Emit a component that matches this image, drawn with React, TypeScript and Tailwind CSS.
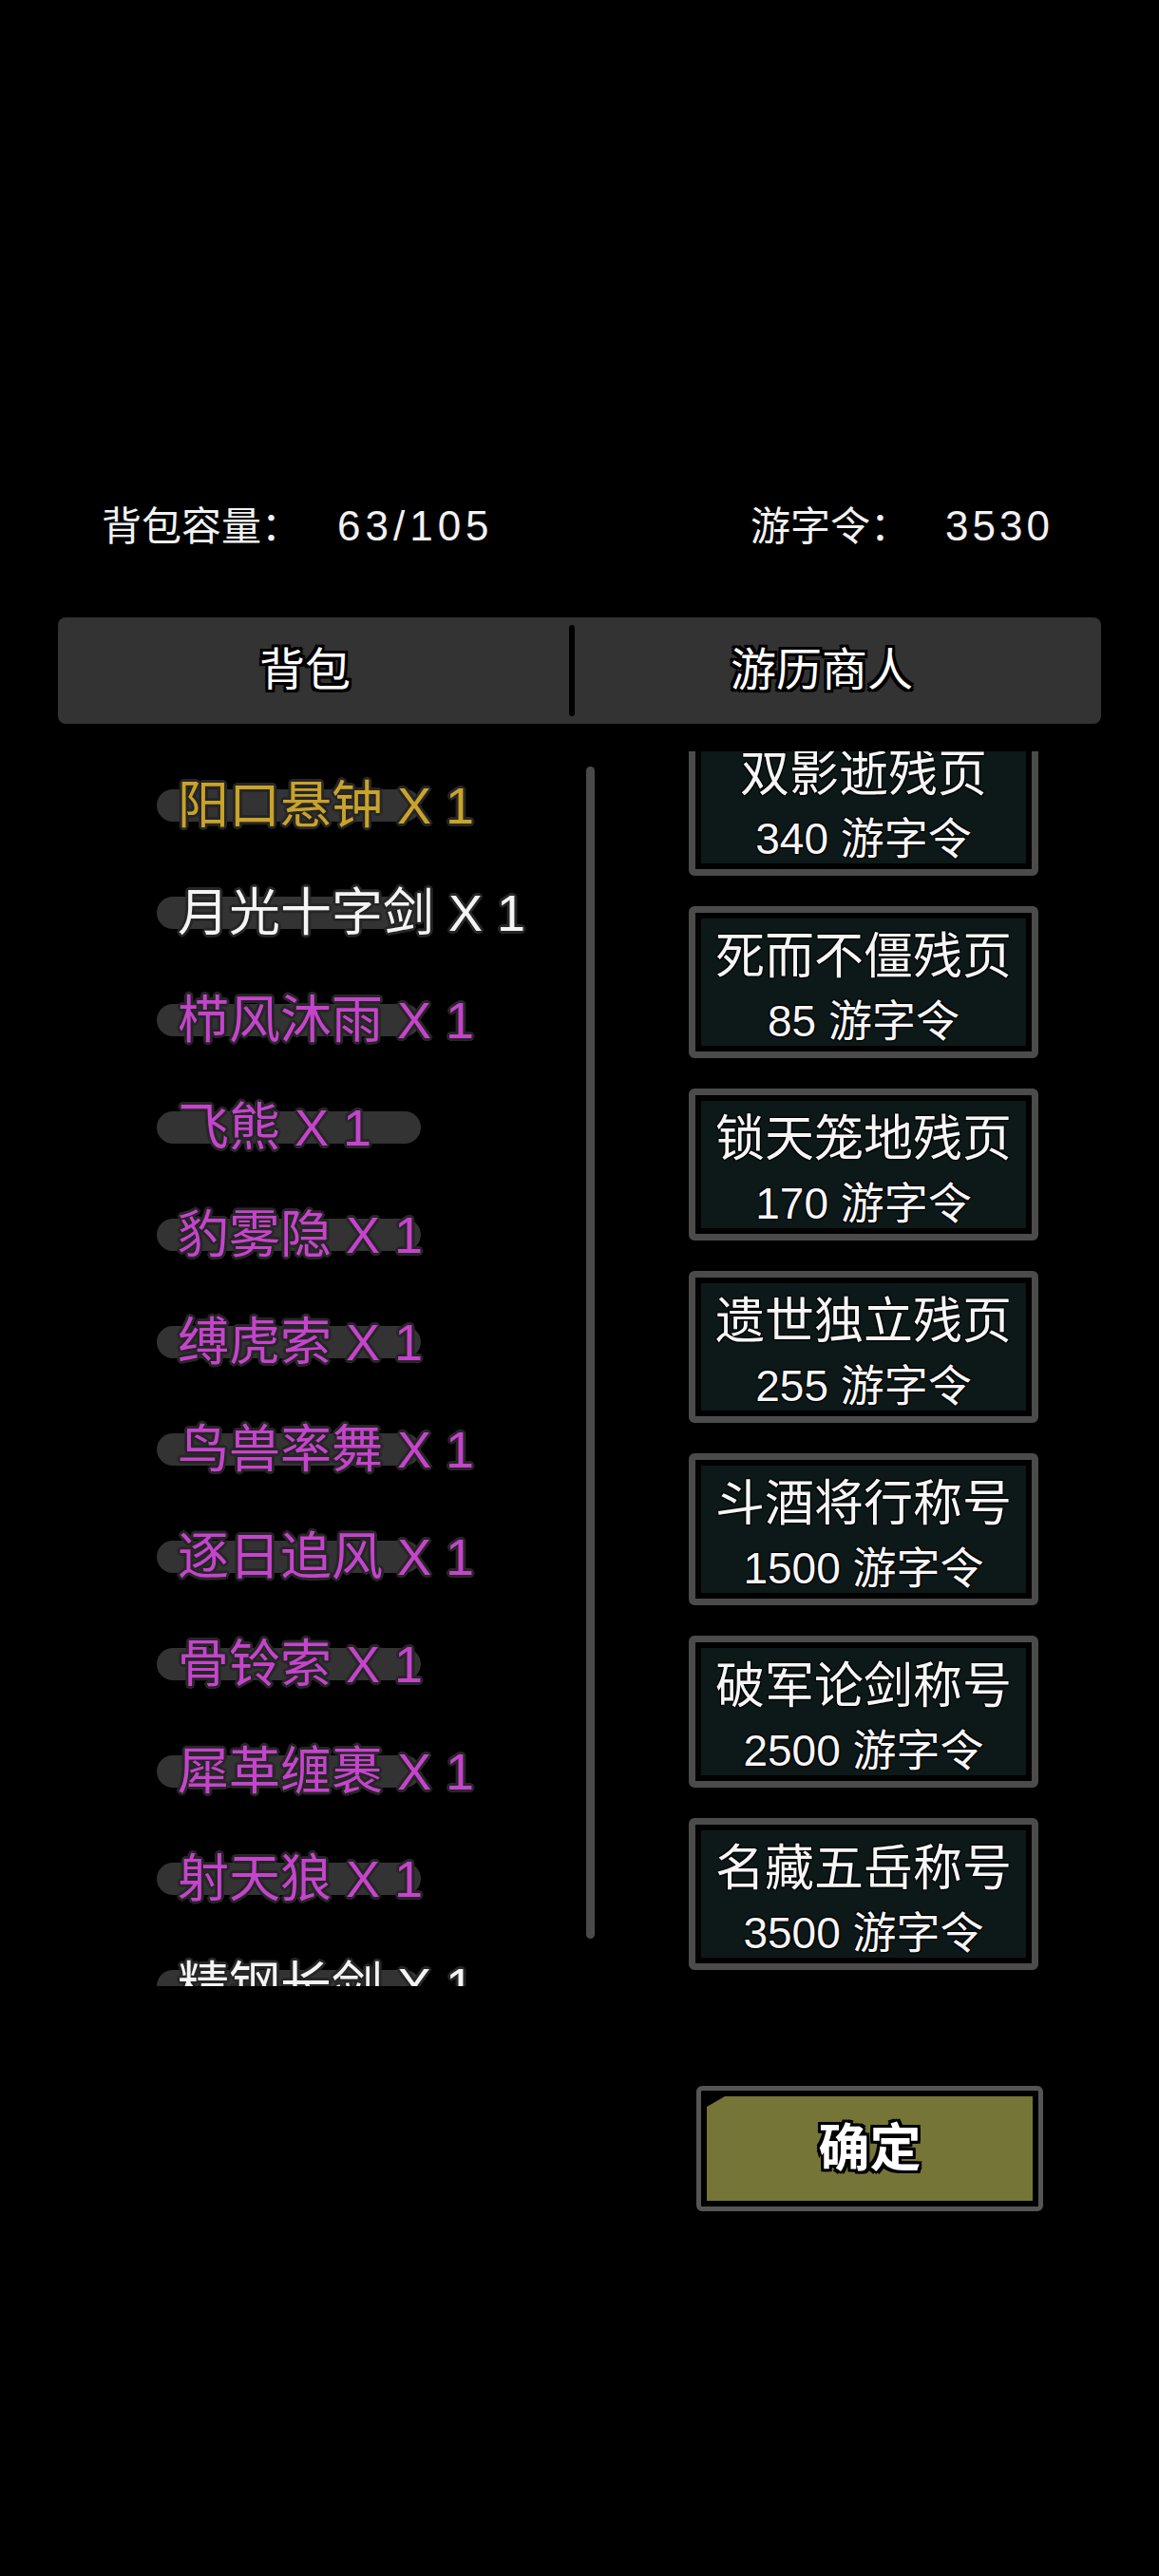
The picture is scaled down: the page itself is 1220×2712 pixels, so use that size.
import React from "react"

type Item = { name: string; color: "gold" | "white" | "purple" }

const items: Item[] = [
  { name: "阳口悬钟", color: "gold" },
  { name: "月光十字剑", color: "white" },
  { name: "栉风沐雨", color: "purple" },
  { name: "飞熊", color: "purple" },
  { name: "豹雾隐", color: "purple" },
  { name: "缚虎索", color: "purple" },
  { name: "鸟兽率舞", color: "purple" },
  { name: "逐日追风", color: "purple" },
  { name: "骨铃索", color: "purple" },
  { name: "犀革缠裹", color: "purple" },
  { name: "射天狼", color: "purple" },
  { name: "精钢长剑", color: "white" },
]

const goods = [
  { name: "双影逝残页", price: 340 },
  { name: "死而不僵残页", price: 85 },
  { name: "锁天笼地残页", price: 170 },
  { name: "遗世独立残页", price: 255 },
  { name: "斗酒将行称号", price: 1500 },
  { name: "破军论剑称号", price: 2500 },
  { name: "名藏五岳称号", price: 3500 },
]

const colorClass = {
  gold: "text-[#c9a32a]",
  white: "text-[#f4f4f4]",
  purple: "text-[#c544cc]",
}

const itemOutline =
  "[text-shadow:3px_0_0_#262626,-3px_0_0_#262626,0_3px_0_#262626,0_-3px_0_#262626,2px_2px_0_#262626,-2px_-2px_0_#262626,2px_-2px_0_#262626,-2px_2px_0_#262626]"

const blackOutline =
  "[text-shadow:3px_0_0_#000,-3px_0_0_#000,0_3px_0_#000,0_-3px_0_#000,3px_3px_0_#000,-3px_-3px_0_#000,3px_-3px_0_#000,-3px_3px_0_#000]"

const thinOutline =
  "[text-shadow:1px_1px_1px_#000,-1px_-1px_1px_#000,1px_-1px_1px_#000,-1px_1px_1px_#000]"

function ItemRow({ item }: { item: Item }) {
  return (
    <div className="relative flex h-[113px] shrink-0 items-center">
      {/* pill behind the label */}
      <div className="absolute left-0 top-1/2 h-[34px] w-[278px] -translate-y-1/2 rounded-full bg-[#333333]" />
      <span className={`relative ml-[22px] whitespace-nowrap text-[54px] leading-none ${colorClass[item.color]} ${itemOutline}`}>
        {item.name} X 1
      </span>
    </div>
  )
}

function ShopCard({ name, price }: { name: string; price: number }) {
  return (
    <div className="h-[160px] w-[368px] shrink-0 rounded-[6px] border-[7px] border-[#4b4b4b] bg-black p-[6px]">
      <div className="flex h-full flex-col items-center overflow-hidden bg-[#0d1919] pt-[13px] text-[#f6f6f6]">
        <div className={`whitespace-nowrap text-[52px] leading-[54px] ${thinOutline}`}>{name}</div>
        <div className={`mt-[14px] whitespace-nowrap text-[46px] leading-[54px] ${thinOutline}`}>
          {price} 游字令
        </div>
      </div>
    </div>
  )
}

export default function App() {
  return (
    <div className="min-h-[2712px] w-full bg-black pt-[526px] [font-family:'Liberation_Sans','Noto_Sans_CJK_SC',sans-serif]">
      {/* Header stats */}
      <div className="flex justify-between pl-[107px] pr-[111px] text-[42px] leading-[56px] text-[#f2f2f2]">
        <div className="flex items-baseline">
          <span>背包容量：</span>
          <span className="ml-[38px] text-[44px] tracking-[5px]">63/105</span>
        </div>
        <div className="flex items-baseline">
          <span>游字令：</span>
          <span className="ml-[37px] text-[44px] tracking-[4px]">3530</span>
        </div>
      </div>

      {/* Tabs */}
      <div className="mx-[61px] mt-[67px] flex h-[112px] items-center rounded-[8px] bg-[#333333] text-[48px] text-white">
        <div className={`flex flex-1 justify-center pr-[18px] ${blackOutline}`}>背包</div>
        <div className="h-[96px] w-[6px] rounded-full bg-black" />
        <div className={`flex flex-1 justify-center pr-[34px] ${blackOutline}`}>游历商人</div>
      </div>

      {/* Content */}
      <div className="mt-[29px] flex h-[1300px]">
        <div className="flex h-full w-[617px] flex-col overflow-hidden pl-[165px]">
          {items.map((item) => (
            <ItemRow key={item.name} item={item} />
          ))}
        </div>
        <div className="mt-[16px] h-[1234px] w-[9px] rounded-full bg-[#4a4a4a]" />
        <div className="ml-[99px] h-full w-[370px] overflow-hidden">
          <div className="-mt-[29px] flex flex-col gap-[32px]">
            {goods.map((g) => (
              <ShopCard key={g.name} name={g.name} price={g.price} />
            ))}
          </div>
        </div>
      </div>

      {/* Confirm */}
      <div className="mt-[105px] flex justify-end pr-[122px]">
        <button className="h-[132px] w-[365px] rounded-[6px] border-[5px] border-[#555555] bg-black p-[6px]">
          <div className="flex h-full w-full items-center justify-center bg-[#757537] [clip-path:polygon(0_11px,19px_0,100%_0,100%_100%,0_100%)]">
            <span className={`text-[54px] font-bold text-white ${blackOutline}`}>确定</span>
          </div>
        </button>
      </div>
    </div>
  )
}
